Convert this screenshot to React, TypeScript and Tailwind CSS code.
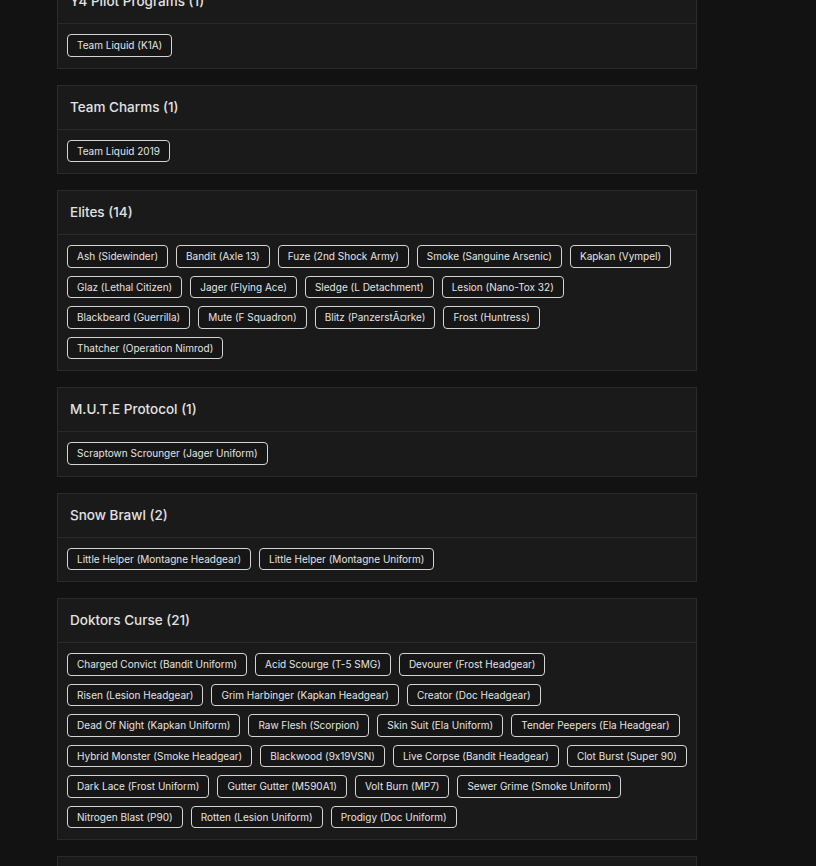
import React from "react";

interface Collection {
  name: string;
  // items grouped by the line they sit on
  rows: string[][];
}

const collections: Collection[] = [
  { name: "Y4 Pilot Programs", rows: [["Team Liquid (K1A)"]] },
  { name: "Team Charms", rows: [["Team Liquid 2019"]] },
  {
    name: "Elites",
    rows: [
      ["Ash (Sidewinder)", "Bandit (Axle 13)", "Fuze (2nd Shock Army)", "Smoke (Sanguine Arsenic)", "Kapkan (Vympel)"],
      ["Glaz (Lethal Citizen)", "Jager (Flying Ace)", "Sledge (L Detachment)", "Lesion (Nano-Tox 32)"],
      ["Blackbeard (Guerrilla)", "Mute (F Squadron)", "Blitz (PanzerstÃ¤rke)", "Frost (Huntress)"],
      ["Thatcher (Operation Nimrod)"],
    ],
  },
  { name: "M.U.T.E Protocol", rows: [["Scraptown Scrounger (Jager Uniform)"]] },
  {
    name: "Snow Brawl",
    rows: [["Little Helper (Montagne Headgear)", "Little Helper (Montagne Uniform)"]],
  },
  {
    name: "Doktors Curse",
    rows: [
      ["Charged Convict (Bandit Uniform)", "Acid Scourge (T-5 SMG)", "Devourer (Frost Headgear)"],
      ["Risen (Lesion Headgear)", "Grim Harbinger (Kapkan Headgear)", "Creator (Doc Headgear)"],
      ["Dead Of Night (Kapkan Uniform)", "Raw Flesh (Scorpion)", "Skin Suit (Ela Uniform)", "Tender Peepers (Ela Headgear)"],
      ["Hybrid Monster (Smoke Headgear)", "Blackwood (9x19VSN)", "Live Corpse (Bandit Headgear)", "Clot Burst (Super 90)"],
      ["Dark Lace (Frost Uniform)", "Gutter Gutter (M590A1)", "Volt Burn (MP7)", "Sewer Grime (Smoke Uniform)"],
      ["Nitrogen Blast (P90)", "Rotten (Lesion Uniform)", "Prodigy (Doc Uniform)"],
    ],
  },
  { name: "Outbreak", rows: [["Patient Zero (Finka Uniform)", "Quarantine (Finka Headgear)"]] },
];

const count = (c: Collection) => c.rows.reduce((n, r) => n + r.length, 0);

const CollectionPanel: React.FC<{ collection: Collection }> = ({ collection }) => (
  <div className="mb-4 border border-[#2a2a2a] bg-[#1a1a1a]">
    {/* Header */}
    <div className="border-b border-[#2a2a2a] px-3 py-3 text-[13.5px] leading-[19px] font-medium text-[#e2e2e2]">
      {collection.name} ({count(collection)})
    </div>

    {/* Items */}
    <div className="flex flex-col gap-2 px-[9px] pt-[10px] pb-[11px]">
      {collection.rows.map((row, i) => (
        <div key={i} className="flex gap-2">
          {row.map((item) => (
            <span
              key={item}
              className="whitespace-nowrap rounded-[4px] border border-[#d4d4d4] bg-[#161616] px-[9px] py-[2px] text-[10px] leading-[16.5px] text-[#e4e4e4] [font-feature-settings:'calt'_0]"
            >
              {item}
            </span>
          ))}
        </div>
      ))}
    </div>
  </div>
);

export default function App() {
  return (
    <div
      className="h-[866px] overflow-hidden bg-[#121212]"
      style={{ fontFamily: "Inter, 'Open Sans', sans-serif" }}
    >
      <div className="-mt-[21px] ml-[57px] w-[640px]">
        {collections.map((c) => (
          <CollectionPanel key={c.name} collection={c} />
        ))}
      </div>
    </div>
  );
}
